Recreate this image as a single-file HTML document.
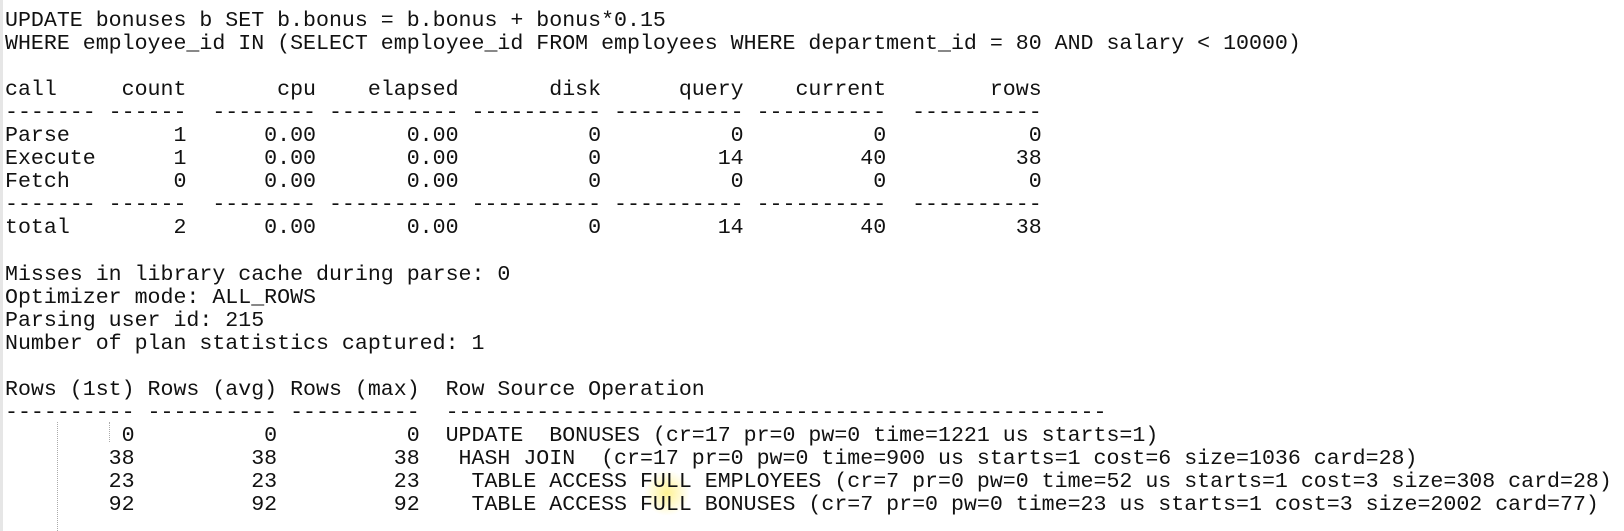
<!DOCTYPE html>
<html><head><style>
html,body{margin:0;padding:0;background:#fff;width:1624px;height:531px;overflow:hidden;}
body{position:relative;}
.strip{position:absolute;left:0;top:0;width:3px;height:531px;background:#e6e6e6;}
pre{position:absolute;left:5px;top:10px;margin:0;font-family:"Liberation Mono","Courier New",monospace;font-size:21.6px;line-height:23.05px;color:#111;}
.dot{position:absolute;width:0;border-left:1px dotted #aaa;}
.glow{position:absolute;left:644px;top:470px;width:46px;height:46px;border-radius:50%;background:radial-gradient(circle,rgba(255,240,120,.8),rgba(255,245,150,0) 70%);}
</style></head><body>
<div class="strip"></div>
<div class="glow"></div>
<div class="dot" style="left:57px;top:422px;height:109px"></div>
<div class="dot" style="left:109px;top:422px;height:20px"></div>
<pre>UPDATE bonuses b SET b.bonus = b.bonus + bonus*0.15
WHERE employee_id IN (SELECT employee_id FROM employees WHERE department_id = 80 AND salary &lt; 10000)

call     count       cpu    elapsed       disk      query    current        rows
------- ------  -------- ---------- ---------- ---------- ----------  ----------
Parse        1      0.00       0.00          0          0          0           0
Execute      1      0.00       0.00          0         14         40          38
Fetch        0      0.00       0.00          0          0          0           0
------- ------  -------- ---------- ---------- ---------- ----------  ----------
total        2      0.00       0.00          0         14         40          38

Misses in library cache during parse: 0
Optimizer mode: ALL_ROWS
Parsing user id: 215
Number of plan statistics captured: 1

Rows (1st) Rows (avg) Rows (max)  Row Source Operation
---------- ---------- ----------  ---------------------------------------------------
         0          0          0  UPDATE  BONUSES (cr=17 pr=0 pw=0 time=1221 us starts=1)
        38         38         38   HASH JOIN  (cr=17 pr=0 pw=0 time=900 us starts=1 cost=6 size=1036 card=28)
        23         23         23    TABLE ACCESS FULL EMPLOYEES (cr=7 pr=0 pw=0 time=52 us starts=1 cost=3 size=308 card=28)
        92         92         92    TABLE ACCESS FULL BONUSES (cr=7 pr=0 pw=0 time=23 us starts=1 cost=3 size=2002 card=77)</pre>
</body></html>
